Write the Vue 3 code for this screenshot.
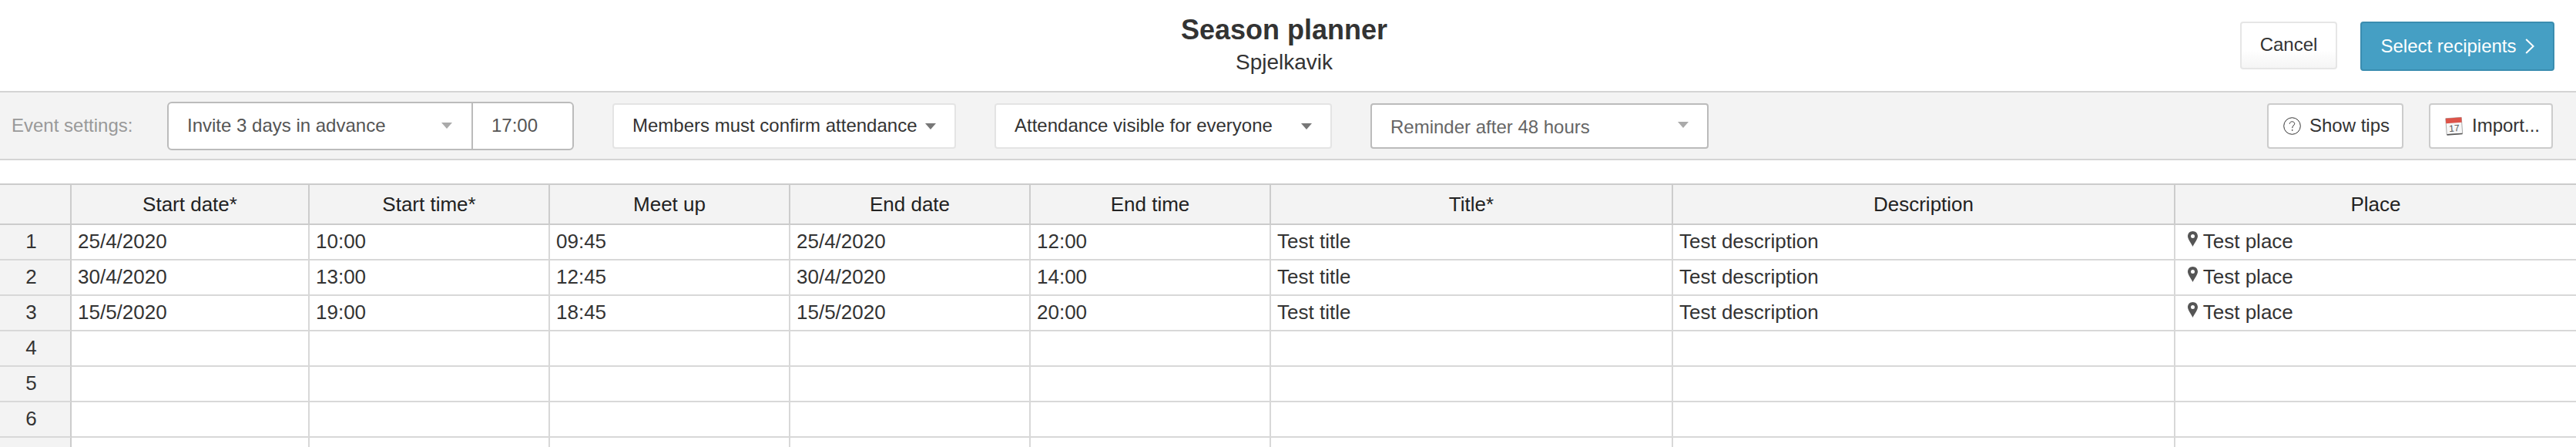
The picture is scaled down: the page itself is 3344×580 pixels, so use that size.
<script setup>
const columns = [
  { label: 'Start date*', width: 309 },
  { label: 'Start time*', width: 312 },
  { label: 'Meet up', width: 312 },
  { label: 'End date', width: 312 },
  { label: 'End time', width: 312 },
  { label: 'Title*', width: 522 },
  { label: 'Description', width: 652 },
  { label: 'Place', width: 520 },
]
const filled = [
  ['25/4/2020', '10:00', '09:45', '25/4/2020', '12:00', 'Test title', 'Test description', 'Test place'],
  ['30/4/2020', '13:00', '12:45', '30/4/2020', '14:00', 'Test title', 'Test description', 'Test place'],
  ['15/5/2020', '19:00', '18:45', '15/5/2020', '20:00', 'Test title', 'Test description', 'Test place'],
]
const rows = Array.from({ length: 7 }, (_, i) => ({ n: i + 1, cells: filled[i] || Array(8).fill('') }))
</script>

<template>
  <div class="page">
    <header class="head">
      <div class="titles">
        <h1>Season planner</h1>
        <p>Spjelkavik</p>
      </div>
      <div class="actions">
        <button class="btn cancel">Cancel</button>
        <button class="btn primary">
          Select recipients
          <svg width="12" height="20" viewBox="0 0 12 20"><path d="M1.2 1 L10.6 10 L1.2 19" fill="none" stroke="#fff" stroke-width="2"/></svg>
        </button>
      </div>
    </header>

    <div class="toolbar">
      <span class="label">Event settings:</span>
      <div class="group">
        <div class="sel invite"><span>Invite 3 days in advance</span><i class="caret light"></i></div>
        <div class="time">17:00</div>
      </div>
      <div class="sel box members"><span>Members must confirm attendance</span><i class="caret"></i></div>
      <div class="sel box visible"><span>Attendance visible for everyone</span><i class="caret"></i></div>
      <div class="sel box reminder"><span>Reminder after 48 hours</span><i class="caret light up"></i></div>
      <div class="tools">
        <button class="tool tips">
          <svg width="23" height="23" viewBox="0 0 23 23">
            <circle cx="11.5" cy="11.5" r="10.8" fill="none" stroke="#333" stroke-width="1"/>
            <path d="M8.2 8.8 C8.4 6.6 9.9 5.8 11.5 5.8 C13.3 5.8 14.7 6.9 14.7 8.5 C14.7 10.6 11.7 11 11.7 14.2" fill="none" stroke="#333" stroke-width="1"/>
            <circle cx="11.7" cy="16.9" r="0.8" fill="#333"/>
          </svg>
          Show tips
        </button>
        <button class="tool import">
          <svg width="24" height="25" viewBox="0 0 24 25">
            <g transform="rotate(-4 12 12.5)">
              <rect x="1.5" y="2" width="20.5" height="21" fill="#f7f7f7" stroke="#999" stroke-width="0.8"/>
              <rect x="1.5" y="2" width="20.5" height="6.5" fill="#dd5349"/>
              <rect x="1.8" y="22.4" width="20" height="1.6" fill="#555"/>
              <text x="11.8" y="19.6" text-anchor="middle" class="cal">17</text>
            </g>
          </svg>
          Import...
        </button>
      </div>
    </div>

    <table class="grid">
      <colgroup>
        <col class="num-col" />
        <col v-for="c in columns" :key="c.label" :style="{ width: c.width + 'px' }" />
      </colgroup>
      <thead>
        <tr>
          <th class="corner"></th>
          <th v-for="c in columns" :key="c.label">{{ c.label }}</th>
        </tr>
      </thead>
      <tbody>
        <tr v-for="r in rows" :key="r.n">
          <th class="num">{{ r.n }}</th>
          <td v-for="(v, i) in r.cells" :key="i" :class="{ place: i === 7 }">
            <svg v-if="i === 7 && v" class="pin" width="13" height="20" viewBox="0 0 13 20">
              <path fill-rule="evenodd" fill="#555" d="M6.5 0 C10.2 0 13 2.8 13 6.5 C13 10 8.6 15.6 6.5 20 C4.4 15.6 0 10 0 6.5 C0 2.8 2.8 0 6.5 0 Z M6.5 3.9 A2.5 2.5 0 1 0 6.5 8.9 A2.5 2.5 0 1 0 6.5 3.9 Z"/>
            </svg>
            {{ v }}
          </td>
        </tr>
      </tbody>
    </table>
  </div>
</template>

<style scoped>
.page {
  width: 3344px;
  height: 580px;
  overflow: hidden;
  background: #fff;
  font-family: "Liberation Sans", Arial, sans-serif;
  color: #333;
}
.head {
  height: 118px;
  display: flex;
  box-sizing: border-box;
}
.titles {
  flex: 1;
  padding-left: 426px;
  text-align: center;
}
.titles h1 {
  margin: 0;
  padding-top: 18px;
  font-size: 36px;
  line-height: 42px;
  font-weight: 700;
  color: #333;
}
.titles p {
  margin: 0;
  padding-top: 4px;
  font-size: 28px;
  line-height: 34px;
  color: #333;
}
.actions {
  display: flex;
  align-items: flex-start;
  gap: 30px;
  padding: 28px 28px 0 0;
}
.btn {
  box-sizing: border-box;
  font-family: inherit;
  font-size: 24px;
  border-radius: 4px;
  padding: 0;
}
.cancel {
  width: 126px;
  height: 62px;
  color: #333;
  background: linear-gradient(#fff 60%, #f5f5f5);
  border: 2px solid #e6e6e6;
  padding-bottom: 3px;
}
.primary {
  width: 252px;
  height: 64px;
  color: #fff;
  background: #459fc4;
  border: 2px solid #3a8db0;
  display: flex;
  align-items: center;
  justify-content: center;
  gap: 11px;
}
.toolbar {
  height: 90px;
  box-sizing: border-box;
  background: #f3f3f3;
  border-top: 2px solid #d4d4d4;
  border-bottom: 2px solid #d4d4d4;
  display: flex;
  align-items: center;
  padding: 0 30px 0 15px;
  font-size: 26px;
}
.label {
  width: 202px;
  color: #999;
  font-size: 24px;
}
.group {
  box-sizing: border-box;
  width: 528px;
  height: 63px;
  display: flex;
  border: 2px solid #bbb;
  border-radius: 6px;
  background: #fff;
  margin-right: 50px;
  font-size: 24px;
}
.sel {
  display: flex;
  align-items: center;
  justify-content: space-between;
  box-sizing: border-box;
  color: #333;
}
.invite {
  width: 395px;
  padding: 0 25px 0 24px;
  border-right: 2px solid #bbb;
  color: #555;
}
.time {
  flex: 1;
  display: flex;
  align-items: center;
  padding-left: 24px;
  color: #555;
}
.box {
  height: 59px;
  background: #fff;
  border: 2px solid #e4e4e4;
  border-radius: 4px;
  font-size: 24px;
}
.members {
  width: 446px;
  padding: 0 24px;
  margin-right: 50px;
}
.visible {
  width: 438px;
  padding: 0 24px;
  margin-right: 50px;
}
.reminder {
  width: 439px;
  padding: 4px 24px 0 24px;
  border-color: #bbb;
  color: #666;
}
.caret {
  width: 0;
  height: 0;
  margin-top: 2px;
  border-left: 7.5px solid transparent;
  border-right: 7.5px solid transparent;
  border-top: 8px solid #777;
}
.caret.light {
  margin-top: 0;
  border-top-color: #aaa;
}
.caret.up {
  margin-top: -6px;
}
.tools {
  margin-left: auto;
  display: flex;
  gap: 33px;
}
.tool {
  box-sizing: border-box;
  height: 59px;
  background: #fff;
  border: 2px solid #ccc;
  border-radius: 4px;
  font-family: inherit;
  font-size: 24px;
  color: #333;
  display: flex;
  align-items: center;
  gap: 11px;
}
.tips {
  width: 177px;
  padding: 0 0 0 19px;
}
.import {
  width: 161px;
  padding: 0 0 0 19px;
}
.cal {
  font-family: "Liberation Sans", sans-serif;
  font-size: 12px;
  fill: #555;
}
.grid {
  margin-top: 30px;
  width: 3344px;
  table-layout: fixed;
  border-collapse: separate;
  border-spacing: 0;
  font-size: 26px;
}
.num-col {
  width: 93px;
}
.grid th,
.grid td {
  box-sizing: border-box;
  border-right: 2px solid #d8d8d8;
  border-bottom: 2px solid #d8d8d8;
  padding: 0 8px 2px;
  height: 46px;
  white-space: nowrap;
}
.grid th:last-child,
.grid td:last-child {
  border-right: none;
}
.grid thead th {
  height: 54px;
  padding-bottom: 0;
  background: #f3f3f3;
  border-top: 2px solid #ccc;
  border-bottom-color: #ccc;
  border-right-color: #ccc;
  font-weight: 400;
  text-align: center;
  color: #222;
}
.grid .num {
  background: #f3f3f3;
  font-weight: 400;
  text-align: center;
  color: #333;
  border-right-color: #ccc;
  padding-right: 18px;
}
.grid td.place {
  padding-left: 16px;
}
.pin {
  vertical-align: 2px;
}
</style>
